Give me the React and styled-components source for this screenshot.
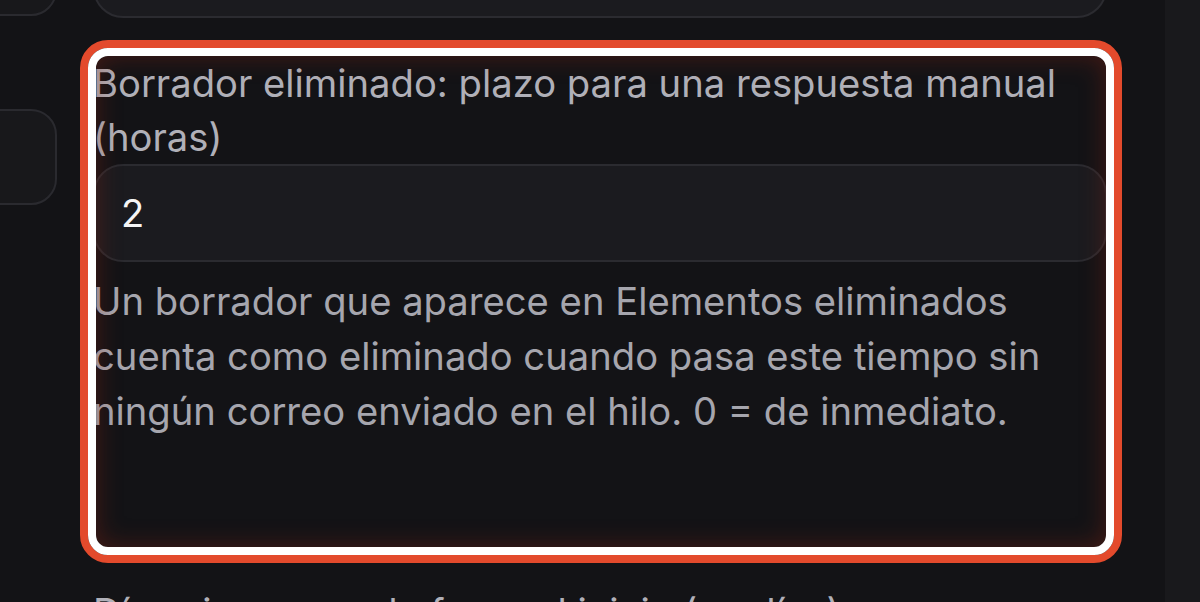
import React from "react";
import styled, { createGlobalStyle } from "styled-components";

const Global = createGlobalStyle`
  html, body { margin: 0; padding: 0; background: #131316; }
  body { width: 1200px; height: 602px; overflow: hidden; font-family: Inter, "Noto Sans", sans-serif; }
`;

const Page = styled.div`
  display: flex;
  width: 1200px;
  height: 602px;
  overflow: hidden;
  background: #131316;
`;

const Rail = styled.div`
  width: 57px;
  flex: none;
  overflow: hidden;
  display: flex;
  flex-direction: column;
  gap: 93px;
  margin-top: -80px;
`;

const RailItem = styled.div`
  margin-left: -60px;
  width: 117px;
  height: 96px;
  flex: none;
  box-sizing: border-box;
  border: 2px solid #2a2a2f;
  border-radius: 26px;
  background: #18181b;
`;

const Main = styled.div`
  width: 1014px;
  margin-left: 36px;
  flex: none;
  display: flex;
  flex-direction: column;
  gap: 38px;
  margin-top: -80px;
`;

const Input = styled.div`
  box-sizing: border-box;
  height: 98px;
  flex: none;
  border: 2px solid #2b2b30;
  border-radius: 30px;
  background: #1b1b1f;
  display: flex;
  align-items: center;
  padding: 0 26px;
  color: #f4f4f5;
  font-size: 38.2px;
`;

const Field = styled.div`
  position: relative;
  display: flex;
  flex-direction: column;
  min-height: ${(p) => p.$minHeight || 0}px;
`;

const Label = styled.div`
  color: #b0b0b8;
  font-size: 38.2px;
  line-height: 54px;
`;

const Help = styled.div`
  color: #a6a6ae;
  font-size: 38.2px;
  line-height: 55px;
  margin-top: 12px;
`;

const Highlight = styled.div`
  position: absolute;
  top: -16px;
  left: -13px;
  width: 1042px;
  height: 523px;
  box-sizing: border-box;
  border: 8px solid #e34a2c;
  border-radius: 28px;
  pointer-events: none;
  &::after {
    content: "";
    position: absolute;
    inset: 0;
    border: 8px solid #ffffff;
    border-radius: 20px;
    box-shadow: inset 0 0 26px rgba(140, 36, 18, 0.42);
  }
`;

const Side = styled.div`
  flex: 1;
  margin-left: 58px;
  background: #19191c;
`;

export default function App() {
  return (
    <>
      <Global />
      <Page>
        <Rail>
          <RailItem />
          <RailItem />
        </Rail>
        <Main>
          <Input />
          <Field $minHeight={491}>
            <Label>Borrador eliminado: plazo para una respuesta manual (horas)</Label>
            <Input>2</Input>
            <Help>
              Un borrador que aparece en Elementos eliminados cuenta como eliminado cuando pasa
              este tiempo sin ningún correo enviado en el hilo. 0 = de inmediato.
            </Help>
            <Highlight />
          </Field>
          <Field>
            <Label>Días sin correo de fuera al inicio (en días)</Label>
          </Field>
        </Main>
        <Side />
      </Page>
    </>
  );
}
